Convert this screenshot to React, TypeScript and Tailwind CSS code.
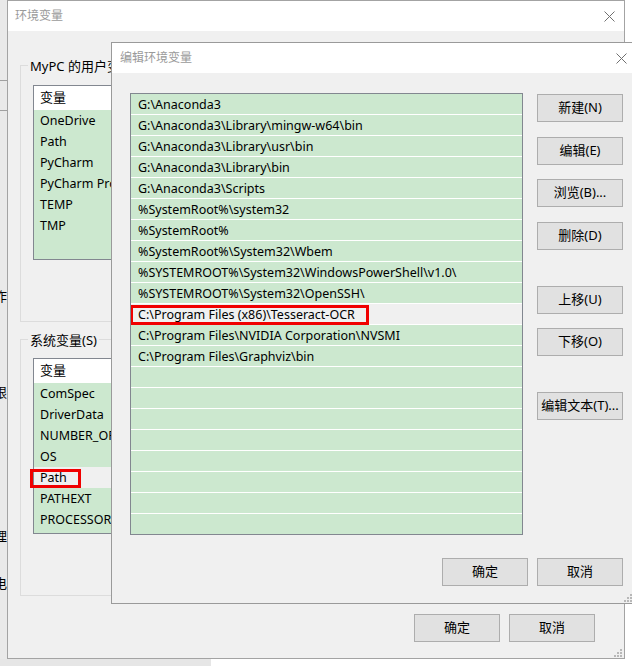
import React from "react";

const userVars = ["OneDrive", "Path", "PyCharm", "PyCharm Pro", "TEMP", "TMP"];
const sysVars = ["ComSpec", "DriverData", "NUMBER_OF_PROCESSORS", "OS", "Path", "PATHEXT", "PROCESSOR_ARCHITECTURE"];

const paths = [
  "G:\\Anaconda3",
  "G:\\Anaconda3\\Library\\mingw-w64\\bin",
  "G:\\Anaconda3\\Library\\usr\\bin",
  "G:\\Anaconda3\\Library\\bin",
  "G:\\Anaconda3\\Scripts",
  "%SystemRoot%\\system32",
  "%SystemRoot%",
  "%SystemRoot%\\System32\\Wbem",
  "%SYSTEMROOT%\\System32\\WindowsPowerShell\\v1.0\\",
  "%SYSTEMROOT%\\System32\\OpenSSH\\",
  "C:\\Program Files (x86)\\Tesseract-OCR",
  "C:\\Program Files\\NVIDIA Corporation\\NVSMI",
  "C:\\Program Files\\Graphviz\\bin",
  "", "", "", "", "", "", "", "",
];

const font = "font-['Noto_Sans','Noto_Sans_CJK_SC',sans-serif]";

function CloseX() {
  return (
    <svg width="11" height="11" viewBox="0 0 11 11">
      <path d="M0.5 0.5 L10.5 10.5 M10.5 0.5 L0.5 10.5" stroke="#707070" strokeWidth="1" />
    </svg>
  );
}

function Grip() {
  // resize grip: little triangle of dots
  const dots = [[6, 0], [3, 3], [6, 3], [0, 6], [3, 6], [6, 6]];
  return (
    <svg width="8" height="8" viewBox="0 0 8 8">
      {dots.map(([x, y], i) => (
        <rect key={i} x={x} y={y} width="2" height="2" fill="#b8b8b8" />
      ))}
    </svg>
  );
}

function Btn({ label, className = "" }: { label: string; className?: string }) {
  return (
    <div className={`w-[86px] h-[28px] shrink-0 flex items-center justify-center bg-[#e1e1e1] border border-[#adadad] text-[13px] text-black ${className}`}>
      {label}
    </div>
  );
}

function VarList({ items, selected, h }: { items: string[]; selected: number; h: string }) {
  return (
    <div className={`ml-[12px] w-[420px] ${h} border border-[#828790] bg-[#cce8cf]`}>
      <div className="h-[24px] bg-white flex items-center pl-[6px] text-[13px]">变量</div>
      {items.map((v, i) => (
        <div
          key={i}
          className={`relative h-[21px] flex items-center pl-[6px] pt-[2px] text-[12.5px] whitespace-nowrap ${i === selected ? "bg-[#f0f0f0]" : ""}`}
        >
          {v}
          {i === selected && (
            <div className="absolute left-[-4px] top-[2px] w-[51px] h-[19px] border-[3px] border-[#f00000]" />
          )}
        </div>
      ))}
    </div>
  );
}

function GroupBox({ label, children }: { label: string; children: React.ReactNode }) {
  return (
    <div className="relative w-[560px] h-[257px] border border-[#dcdcdc]">
      <div className="absolute left-[7px] -top-[10px] px-[2px] bg-[#f0f0f0] leading-[20px] text-[13px]">{label}</div>
      {children}
    </div>
  );
}

export default function App() {
  return (
    <div className={`relative w-[632px] h-[666px] overflow-hidden bg-white text-black ${font}`}>
      {/* window behind, left edge */}
      <div className="absolute left-0 top-0 w-[7px] h-full bg-[#e9e9e9] overflow-hidden flex flex-col text-[13px]">
        <div className="mt-[80px] h-px bg-[#a0a0a0]" />
        <div className="mt-[29px] h-px bg-[#a0a0a0]" />
        <div className="mt-[175px] h-[20px] leading-[20px] flex justify-end whitespace-nowrap"><span className="shrink-0">工作</span></div>
        <div className="mt-[76px] h-[20px] leading-[20px] flex justify-end whitespace-nowrap"><span className="shrink-0">权限</span></div>
        <div className="mt-[124px] h-[20px] leading-[20px] flex justify-end whitespace-nowrap"><span className="shrink-0">管理</span></div>
        <div className="mt-[27px] h-[20px] leading-[20px] flex justify-end whitespace-nowrap"><span className="shrink-0">供电</span></div>
      </div>
      <div className="absolute left-0 bottom-0 w-[211px] h-[7px] bg-[#e6e6e6]" />

      {/* 环境变量 */}
      <div className="absolute left-[7px] top-0 w-[618px] h-[659px] border border-[#a3a3a3] bg-[#f0f0f0] flex flex-col">
        <div className="h-[30px] shrink-0 bg-white flex items-center justify-between pl-[7px] pr-[9px] text-[12px] text-[#9a9a9a]">
          <span>环境变量</span>
          <CloseX />
        </div>
        <div className="flex flex-col pl-[12px] pt-[34px]">
          <GroupBox label="MyPC 的用户变量(U)">
            <div className="mt-[19px]">
              <VarList items={userVars} selected={-1} h="h-[175px]" />
            </div>
          </GroupBox>
          <div className="mt-[17px]">
            <GroupBox label="系统变量(S)">
              <div className="mt-[18px]">
                <VarList items={sysVars} selected={4} h="h-[176px]" />
              </div>
            </GroupBox>
          </div>
          <div className="mt-[18px] flex justify-end gap-[9px] pr-[29px]">
            <Btn label="确定" />
            <Btn label="取消" />
          </div>
        </div>
        <div className="absolute right-[2px] bottom-[1px]">
          <Grip />
        </div>
      </div>

      {/* 编辑环境变量 */}
      <div className="absolute left-[111px] top-[42px] w-[524px] h-[562px] border border-[#9a9a9a] bg-[#f0f0f0] flex flex-col">
        <div className="h-[30px] shrink-0 bg-white flex items-center justify-between pl-[8px] pr-[7px] text-[12px] text-[#9a9a9a]">
          <span>编辑环境变量</span>
          <CloseX />
        </div>
        <div className="flex pt-[20px] pl-[18px]">
          <div className="w-[393px] h-[442px] border border-[#828790] bg-[#cce8cf] overflow-hidden">
            {paths.map((p, i) => (
              <div
                key={i}
                className={`relative h-[21px] border-b border-white flex items-center pl-[7px] pt-[2px] text-[12.5px] whitespace-nowrap ${i === 10 ? "bg-[#f0f0f0]" : ""}`}
              >
                {p}
                {i === 10 && (
                  <div className="absolute left-[-1px] top-[1px] w-[239px] h-[20px] border-[3px] border-[#f00000]" />
                )}
              </div>
            ))}
          </div>
          <div className="ml-[14px] pt-[1px] flex flex-col">
            <Btn label="新建(N)" />
            <Btn label="编辑(E)" className="mt-[15px]" />
            <Btn label="浏览(B)..." className="mt-[14px]" />
            <Btn label="删除(D)" className="mt-[15px]" />
            <Btn label="上移(U)" className="mt-[36px]" />
            <Btn label="下移(O)" className="mt-[14px]" />
            <Btn label="编辑文本(T)..." className="mt-[36px]" />
          </div>
        </div>
        <div className="mt-[23px] flex justify-end gap-[9px] pr-[11px]">
          <Btn label="确定" />
          <Btn label="取消" />
        </div>
        <div className="absolute right-[2px] bottom-[1px]">
          <Grip />
        </div>
      </div>
    </div>
  );
}
